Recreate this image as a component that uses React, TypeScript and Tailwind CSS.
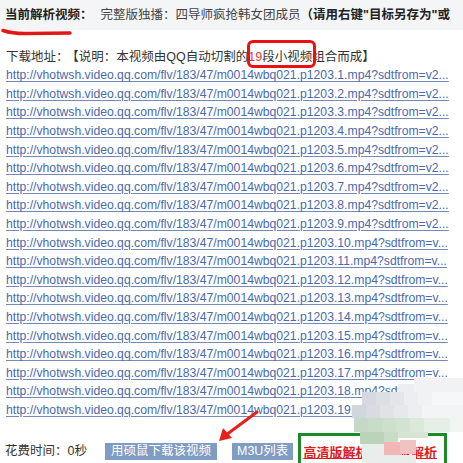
import React from "react";

const FONT = '"Liberation Sans", "Noto Sans CJK SC", sans-serif';

export default function App() {
  const rows = Array.from({ length: 19 }, (_, i) => i + 1);
  return (
    <div
      className="relative w-[463px] h-[463px] overflow-hidden bg-white text-[#333]"
      style={{ fontFamily: FONT }}
    >
      {/* header */}
      <div className="h-[30px] bg-[#f4f5f7] pl-[5px] flex items-center whitespace-nowrap text-[12.5px] overflow-hidden">
        <span className="font-bold text-[#222]">当前解析视频：</span>
        <span className="text-[#444] ml-[8px]">完整版独播：四导师疯抢韩女团成员</span>
        <span className="font-bold text-[#222]">（请用右键"目标另存为"或</span>
      </div>

      {/* info line */}
      <div className="mt-[17.7px] pl-[6px] h-[18.6px] leading-[18.6px] text-[12.5px] whitespace-nowrap text-[#333]">
        <span>下载地址：</span>
        <span className="ml-[4px]">【说明：本视频由QQ自动切割的</span>
        <span className="text-[#e23a3a]">19</span>
        <span>段小视频组合而成】</span>
      </div>

      {/* links */}
      <div className="flex flex-col pl-[6px]">
        {rows.map((n) => (
          <div
            key={n}
            className="h-[18.6px] leading-[18.6px] text-[12.2px] whitespace-nowrap overflow-hidden"
          >
            <span className="text-[#4a6aab] underline decoration-[#7489b8] underline-offset-2">
              {`http://vhotwsh.video.qq.com/flv/183/47/m0014wbq021.p1203.${n}.mp4?sdtfrom=${
                n < 10 ? "v2..." : "v..."
              }`}
            </span>
          </div>
        ))}
      </div>

      {/* bottom row */}
      <div className="mt-[13px] flex items-start whitespace-nowrap text-[12.5px]">
        <span className="ml-[5px] mt-[9px] leading-[18px] text-[#333]">花费时间：0秒</span>
        <span className="ml-[18px] mt-[10px] h-[17px] leading-[17px] px-[6px] bg-[#7f9cc3] text-white">
          用硕鼠下载该视频
        </span>
        <span className="ml-[15px] mt-[10px] h-[17px] leading-[17px] px-[5px] bg-[#7f9cc3] text-white">
          M3U列表
        </span>
        <div className="ml-[5px] h-[36px] w-[149px] border-[3px] border-[#1c8a26] pt-[8px] pl-[2px] leading-[17px]">
          <span className="font-bold text-[#e01c1c] underline text-[13px]">高清版解析 超清版解析</span>
        </div>
      </div>

      {/* red underline under header title */}
      <svg className="absolute left-0 top-0 pointer-events-none" width="90" height="40">
        <path d="M3 30.5 Q 14 34 28 33.5 L 70 33" stroke="#e01818" strokeWidth="3.5" fill="none" strokeLinecap="round" />
      </svg>

      {/* red box around 19段小视频 */}
      <div className="absolute left-[247px] top-[40px] w-[69px] h-[28px] border-[3px] border-[#ec1010] rounded-[6px] pointer-events-none" />

      {/* red arrow */}
      <svg className="absolute left-0 top-0 pointer-events-none" width="463" height="463">
        <line x1="257" y1="412" x2="226" y2="435" stroke="#e8201c" strokeWidth="3" strokeLinecap="round" />
        <polygon points="219,441 223,428 232,438" fill="#e8201c" />
      </svg>

      {/* mosaic overlay */}
      <svg className="absolute left-0 top-0 pointer-events-none" width="463" height="463">
        <g>
          <rect x="414" y="378" width="49" height="14" fill="#f1f2f4" />
          <rect x="398" y="384" width="16" height="8" fill="#eceef1" />
          <rect x="362" y="392" width="14" height="13" fill="#d6d9df" />
          <rect x="376" y="392" width="14" height="13" fill="#dcdfe4" />
          <rect x="390" y="392" width="14" height="13" fill="#e3e5e9" />
          <rect x="404" y="392" width="14" height="13" fill="#eceef1" />
          <rect x="418" y="392" width="14" height="13" fill="#f1f2f4" />
          <rect x="432" y="392" width="31" height="13" fill="#f6f7f8" />
          <rect x="352" y="405" width="14" height="13" fill="#d2d6dc" />
          <rect x="366" y="405" width="14" height="13" fill="#d8dbe1" />
          <rect x="380" y="405" width="14" height="13" fill="#e0e2e6" />
          <rect x="394" y="405" width="14" height="13" fill="#e6e8eb" />
          <rect x="408" y="405" width="14" height="13" fill="#eceef0" />
          <rect x="422" y="405" width="41" height="13" fill="#f3f4f5" />
          <rect x="354" y="418" width="14" height="14" fill="#c6d9c6" />
          <rect x="368" y="418" width="14" height="14" fill="#c9dcc8" />
          <rect x="382" y="418" width="14" height="14" fill="#cde0cc" />
          <rect x="396" y="418" width="14" height="14" fill="#d3e3d2" />
          <rect x="410" y="418" width="14" height="14" fill="#dbe8da" />
          <rect x="424" y="418" width="26" height="14" fill="#e6efe5" />
          <rect x="450" y="418" width="13" height="14" fill="#f2f5f2" />
          <rect x="360" y="432" width="24" height="12" fill="#b9d4b9" />
          <rect x="384" y="432" width="14" height="12" fill="#c8dcc6" />
          <rect x="398" y="432" width="30" height="6" fill="#d6e5d4" />
          <rect x="362" y="444" width="22" height="19" fill="#e9eeec" />
          <rect x="384" y="442" width="16" height="13" fill="#f2b6b6" />
          <rect x="400" y="440" width="16" height="14" fill="#f0c2c2" />
          <rect x="384" y="455" width="32" height="8" fill="#e9eeec" />
        </g>
      </svg>
    </div>
  );
}
